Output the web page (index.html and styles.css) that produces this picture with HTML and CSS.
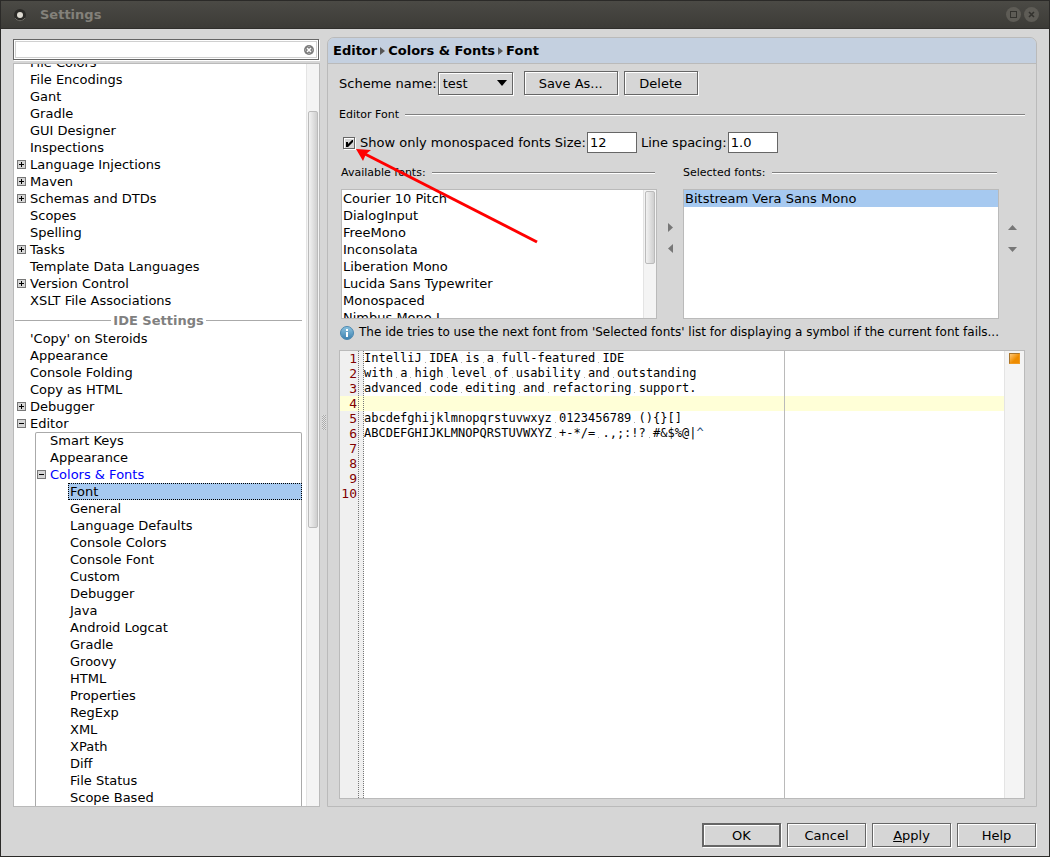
FILE: index.html
```
<!DOCTYPE html>
<html lang="en">
<head>
  <meta charset="UTF-8">
  <title>Settings</title>
  <link rel="stylesheet" href="styles.css">
</head>
<body>
  <header class="titlebar">
    <svg class="app-dot" width="14" height="14" viewBox="0 0 14 14">
      <circle cx="7" cy="7" r="6" fill="#2b2a27"/>
      <path d="M2 10a6 6 0 0 0 10 0" fill="none" stroke="#6b6963"/>
      <circle cx="7" cy="7" r="3" fill="#dfdbd2"/>
    </svg>
    <h1>Settings</h1>
    <div class="window-buttons">
      <button aria-label="Maximize">
        <svg width="15" height="15" viewBox="0 0 15 15"><circle cx="7.5" cy="7.5" r="7.5" fill="#5e5c56"/><rect x="4.5" y="4.5" width="6" height="6" fill="none" stroke="#33322e"/></svg>
      </button>
      <button aria-label="Close">
        <svg width="15" height="15" viewBox="0 0 15 15"><circle cx="7.5" cy="7.5" r="7.5" fill="#5e5c56"/><path d="M5 5l5 5M10 5l-5 5" stroke="#33322e" stroke-width="1.6"/></svg>
      </button>
    </div>
  </header>

  <main>
    <aside class="sidebar">
      <div class="search">
        <input type="text" aria-label="Search settings">
        <button aria-label="Clear">
          <svg width="10" height="10" viewBox="0 0 10 10"><circle cx="5" cy="5" r="5" fill="#7d7d7d"/><path d="M3 3l4 4M7 3l-4 4" stroke="#fff" stroke-width="1.5"/><path d="M5 1v1M5 8v1M1 5h1M8 5h1" stroke="#ccc"/></svg>
        </button>
      </div>
      <nav class="tree">
        <div class="tree-items">
          <ul>
            <li><a href="#">File Colors</a></li>
            <li><a href="#">File Encodings</a></li>
            <li><a href="#">Gant</a></li>
            <li><a href="#">Gradle</a></li>
            <li><a href="#">GUI Designer</a></li>
            <li><a href="#">Inspections</a></li>
            <li><button class="toggle" aria-label="Expand"></button><a href="#">Language Injections</a></li>
            <li><button class="toggle" aria-label="Expand"></button><a href="#">Maven</a></li>
            <li><button class="toggle" aria-label="Expand"></button><a href="#">Schemas and DTDs</a></li>
            <li><a href="#">Scopes</a></li>
            <li><a href="#">Spelling</a></li>
            <li><button class="toggle" aria-label="Expand"></button><a href="#">Tasks</a></li>
            <li><a href="#">Template Data Languages</a></li>
            <li><button class="toggle" aria-label="Expand"></button><a href="#">Version Control</a></li>
            <li><a href="#">XSLT File Associations</a></li>
          </ul>
          <h2>IDE Settings</h2>
          <ul>
            <li><a href="#">'Copy' on Steroids</a></li>
            <li><a href="#">Appearance</a></li>
            <li><a href="#">Console Folding</a></li>
            <li><a href="#">Copy as HTML</a></li>
            <li><button class="toggle" aria-label="Expand"></button><a href="#">Debugger</a></li>
            <li><button class="toggle open" aria-label="Collapse"></button><a href="#">Editor</a></li>
          </ul>
          <ul class="group">
            <li><a href="#">Smart Keys</a></li>
            <li><a href="#">Appearance</a></li>
            <li><button class="toggle open" aria-label="Collapse"></button><a class="active" href="#">Colors &amp; Fonts</a></li>
            <li class="leaf selected"><a href="#">Font</a></li>
            <li class="leaf"><a href="#">General</a></li>
            <li class="leaf"><a href="#">Language Defaults</a></li>
            <li class="leaf"><a href="#">Console Colors</a></li>
            <li class="leaf"><a href="#">Console Font</a></li>
            <li class="leaf"><a href="#">Custom</a></li>
            <li class="leaf"><a href="#">Debugger</a></li>
            <li class="leaf"><a href="#">Java</a></li>
            <li class="leaf"><a href="#">Android Logcat</a></li>
            <li class="leaf"><a href="#">Gradle</a></li>
            <li class="leaf"><a href="#">Groovy</a></li>
            <li class="leaf"><a href="#">HTML</a></li>
            <li class="leaf"><a href="#">Properties</a></li>
            <li class="leaf"><a href="#">RegExp</a></li>
            <li class="leaf"><a href="#">XML</a></li>
            <li class="leaf"><a href="#">XPath</a></li>
            <li class="leaf"><a href="#">Diff</a></li>
            <li class="leaf"><a href="#">File Status</a></li>
            <li class="leaf"><a href="#">Scope Based</a></li>
          </ul>
        </div>
        <div class="scrollbar tree-scroll"><div class="thumb"></div></div>
      </nav>
    </aside>

    <div class="splitter"><span></span></div>

    <section class="panel">
      <div class="breadcrumb">
        <span>Editor</span><i></i><span>Colors &amp; Fonts</span><i></i><span>Font</span>
      </div>

      <div class="content">
        <div class="row scheme">
          <label for="scheme">Scheme name:</label>
          <select id="scheme"><option>test</option></select>
          <button class="btn save">Save As...</button>
          <button class="btn delete">Delete</button>
        </div>

        <h3 class="rule">Editor Font</h3>

        <div class="row font-options">
          <input type="checkbox" id="mono" checked>
          <label for="mono">Show only monospaced fonts</label>
          <label class="field-label" for="size">Size:</label>
          <input type="text" id="size" value="12">
          <label class="field-label" for="spacing">Line spacing:</label>
          <input type="text" id="spacing" value="1.0">
        </div>

        <div class="font-lists">
          <div class="font-column">
            <h3 class="rule">Available fonts:</h3>
            <div class="listbox">
              <ul>
                <li>Courier 10 Pitch</li>
                <li>DialogInput</li>
                <li>FreeMono</li>
                <li>Inconsolata</li>
                <li>Liberation Mono</li>
                <li>Lucida Sans Typewriter</li>
                <li>Monospaced</li>
                <li>Nimbus Mono L</li>
              </ul>
              <div class="scrollbar list-scroll"><div class="thumb"></div></div>
            </div>
          </div>
          <div class="movers">
            <button aria-label="Add"><svg width="5" height="9" viewBox="0 0 5 9"><path d="M0 0l5 4.500L0 9z"/></svg></button>
            <button aria-label="Remove"><svg width="5" height="9" viewBox="0 0 5 9"><path d="M5 0L0 4.500 5 9z"/></svg></button>
          </div>
          <div class="font-column">
            <h3 class="rule">Selected fonts:</h3>
            <div class="listbox">
              <ul>
                <li class="selected">Bitstream Vera Sans Mono</li>
              </ul>
            </div>
          </div>
          <div class="movers">
            <button aria-label="Move up"><svg width="9" height="5" viewBox="0 0 9 5"><path d="M0 5l4.500-5L9 5z"/></svg></button>
            <button aria-label="Move down"><svg width="9" height="5" viewBox="0 0 9 5"><path d="M0 0l4.500 5L9 0z"/></svg></button>
          </div>
        </div>

        <p class="hint">
          <svg width="14" height="14" viewBox="0 0 14 14">
            <defs><linearGradient id="info" x1="0" y1="0" x2="0" y2="1"><stop offset="0" stop-color="#8ec4e0"/><stop offset="1" stop-color="#3a7fae"/></linearGradient></defs>
            <circle cx="7" cy="7" r="6.500" fill="url(#info)" stroke="#4c88b0"/>
            <path d="M6 3h2v2H6zM6 6h2v5H6z" fill="#fff"/>
          </svg>
          <span>The ide tries to use the next font from 'Selected fonts' list for displaying a symbol if the current font fails...</span>
        </p>

        <div class="editor">
          <div class="code">
            <div class="line"><b>1</b><code>IntelliJ IDEA is a full-featured IDE</code></div>
            <div class="line"><b>2</b><code>with a high level of usability and outstanding</code></div>
            <div class="line"><b>3</b><code>advanced code editing and refactoring support.</code></div>
            <div class="line current"><b>4</b><code></code></div>
            <div class="line"><b>5</b><code>abcdefghijklmnopqrstuvwxyz 0123456789 (){}[]</code></div>
            <div class="line"><b>6</b><code>ABCDEFGHIJKLMNOPQRSTUVWXYZ +-*/= .,;:!? #&amp;$%@|<span class="caret-char">^</span></code></div>
            <div class="line"><b>7</b><code></code></div>
            <div class="line"><b>8</b><code></code></div>
            <div class="line"><b>9</b><code></code></div>
            <div class="line"><b>10</b><code></code></div>
            <div class="fold-guide"></div>
            <div class="margin-guide"></div>
          </div>
          <div class="stripe"><span></span></div>
        </div>

        <svg class="pointer" width="184" height="96" viewBox="0 0 184 96">
          <path d="M9 5L181 93" stroke="#f00" stroke-width="3"/>
          <path d="M0 0L15 1 10 5 7 12z" fill="#f00"/>
        </svg>
      </div>
    </section>
  </main>

  <footer>
    <button class="btn primary">OK</button>
    <button class="btn">Cancel</button>
    <button class="btn"><u>A</u>pply</button>
    <button class="btn">Help</button>
  </footer>

  <script>
    // show whitespace dots in the preview
    document.querySelectorAll(".line code").forEach(code => {
      code.childNodes.forEach(node => {
        if (node.nodeType !== Node.TEXT_NODE) return;
        const parts = node.textContent.split(" ");
        const out = document.createDocumentFragment();
        parts.forEach((part, i) => {
          if (i > 0) {
            const ws = document.createElement("span");
            ws.className = "ws";
            ws.textContent = " ";
            out.append(ws);
          }
          out.append(part);
        });
        node.replaceWith(out);
      });
    });
  </script>
</body>
</html>
```
FILE: styles.css
```
* {
  box-sizing: border-box;
}

body {
  margin: 0;
  height: 100vh;
  display: flex;
  flex-direction: column;
  overflow: hidden;
  background: #d6d6d6;
  border: 1px solid #2b2a28;
  font-family: "DejaVu Sans", sans-serif;
  font-size: 13px;
  line-height: 17px;
  color: #000;
}

button, input, select {
  font-family: inherit;
  font-size: inherit;
  color: inherit;
  border-radius: 0;
}

h1, h2, h3, p, ul {
  margin: 0;
  padding: 0;
  font-size: inherit;
}

ul {
  list-style: none;
}

a {
  color: inherit;
  text-decoration: none;
}

svg {
  flex: none;
}

/* title bar */
.titlebar {
  flex: none;
  display: flex;
  align-items: center;
  height: 28px;
  padding: 0 10px 0 12px;
  background: linear-gradient(#4b4a45, #3c3b37);
  border-bottom: 1px solid #2f2e2b;
}

.titlebar h1 {
  flex: 1;
  margin-left: 13px;
  color: #83817a;
}

.window-buttons {
  display: flex;
  gap: 3px;
}

.window-buttons button,
.search button,
.movers button {
  display: flex;
  padding: 0;
  border: 0;
  background: none;
}

main {
  flex: 1;
  min-height: 0;
  display: flex;
  padding: 8px 12px 0;
}

/* sidebar */
.sidebar {
  flex: none;
  width: 307px;
  display: flex;
  flex-direction: column;
  padding-top: 2px;
}

.search {
  display: flex;
  align-items: center;
  height: 21px;
  margin: 0 1px 3px 0;
  padding: 1px 4px 1px 1px;
  background: #fff;
  border: 1px solid #666;
  box-shadow: inset 0 0 0 1px #fff, inset 0 0 0 2px #d0d0d0, 1px 1px 0 #fff;
}

.search input {
  flex: 1;
  min-width: 0;
  height: 16px;
  padding: 0 4px;
  border: 0;
  background: none;
  outline: none;
}

.tree {
  flex: 1;
  min-height: 0;
  display: flex;
  overflow: hidden;
  background: #fff;
  border: 1px solid #bababa;
}

.tree-items {
  flex: 1;
  margin-top: -10px;
  padding-right: 4px;
}

.tree li {
  display: flex;
  align-items: center;
  height: 17px;
  padding-left: 16px;
  white-space: nowrap;
}

.toggle {
  width: 9px;
  height: 9px;
  margin: 0 4px 0 -13px;
  padding: 0;
  border: 1px solid #777;
  background:
    linear-gradient(#000, #000) center / 5px 1px no-repeat,
    linear-gradient(#000, #000) center / 1px 5px no-repeat,
    #d6d6d6;
}

.toggle.open {
  background: linear-gradient(#000, #000) center / 5px 1px no-repeat, #d6d6d6;
}

.tree h2 {
  display: flex;
  align-items: center;
  gap: 2px;
  height: 21px;
  padding: 2px 0 0 1px;
  color: #808080;
}

.tree h2::before,
.tree h2::after {
  content: "";
  flex: 1;
  height: 1px;
  background: #aaa;
}

.tree .group {
  margin-left: 21px;
  padding-bottom: 17px;
  box-shadow: inset 0 0 0 1px #aaa;
  border-radius: 2px 2px 0 0;
}

.group li {
  padding-left: 15px;
}

.group .leaf {
  margin-left: 33px;
  padding-left: 2px;
}

.group .selected {
  padding-left: 1px;
  background: #a6c9f0;
  border: 1px dotted #000;
}

.active {
  color: #00f;
}

.scrollbar {
  flex: none;
  width: 13px;
  padding: 1px;
  background: #f4f4f4;
  border-left: 1px solid #e4e4e4;
}

.thumb {
  border: 1px solid #bbb;
  border-radius: 2px;
  background: linear-gradient(to right, #f2f2f2, #cfcfcf);
}

.tree-scroll {
  padding-top: 47px;
}

.tree-scroll .thumb {
  height: 417px;
}

.splitter {
  flex: none;
  width: 7px;
  display: flex;
  align-items: center;
  justify-content: center;
}

.splitter span {
  width: 4px;
  height: 15px;
  background: repeating-conic-gradient(#aaa 0 25%, #e4e4e4 0 50%) 0 0 / 2px 2px;
}

/* settings panel */
.panel {
  flex: 1;
  min-width: 0;
  display: flex;
  flex-direction: column;
  border: 1px solid #bababa;
  border-radius: 7px 7px 0 0;
}

.breadcrumb {
  flex: none;
  display: flex;
  align-items: center;
  height: 26px;
  padding-left: 5px;
  background: #c4d0e0;
  border-bottom: 1px solid #bababa;
  border-radius: 6px 6px 0 0;
  font-weight: bold;
}

.breadcrumb i {
  margin: 0 3px;
  border: 4px solid transparent;
  border-left: 5px solid #555;
  border-right: 0;
}

.content {
  position: relative;
  flex: 1;
  min-height: 0;
  display: flex;
  flex-direction: column;
  padding: 7px 11px;
}

.row {
  flex: none;
  display: flex;
  align-items: center;
}

.btn {
  width: 79px;
  height: 24px;
  padding: 0;
  background: #d6d6d6;
  border: 1px solid #666;
  box-shadow: inset 1px 1px 0 #fff, 1px 1px 0 #fff;
}

.scheme {
  height: 24px;
}

.scheme select {
  width: 75px;
  height: 23px;
  margin: 0 11px 0 1px;
  padding: 0 4px;
  appearance: none;
  border: 1px solid #666;
  box-shadow: inset 1px 1px 0 #fff, 1px 1px 0 #fff;
  background: #d6d6d6 url("data:image/svg+xml,%3Csvg xmlns='http://www.w3.org/2000/svg' width='10' height='6'%3E%3Cpath d='M0 0h10L5 6z'/%3E%3C/svg%3E") right 5px center no-repeat;
}

.btn.save {
  width: 94px;
  margin-right: 6px;
}

.btn.delete {
  width: 74px;
}

.rule {
  flex: none;
  display: flex;
  align-items: center;
  gap: 6px;
  font-size: 11px;
  font-weight: normal;
}

.rule::after {
  content: "";
  flex: 1;
  height: 2px;
  background: linear-gradient(#808080 50%, #fff 50%);
}

.content > .rule {
  margin-top: 11px;
}

.font-options {
  margin-top: 9px;
  padding-left: 4px;
}

.font-options input[type="checkbox"] {
  width: 12px;
  height: 12px;
  margin: 0 5px 0 0;
  appearance: none;
  border: 1px solid #666;
  box-shadow: inset 1px 1px 0 #fff, 1px 1px 0 #fff;
}

.font-options input[type="checkbox"]:checked {
  background: url("data:image/svg+xml,%3Csvg xmlns='http://www.w3.org/2000/svg' width='10' height='10'%3E%3Cpath d='M2 4h2v2l4-4h1v2L4 9H2z'/%3E%3C/svg%3E") no-repeat;
}

.font-options input[type="text"] {
  width: 50px;
  height: 21px;
  margin-left: 1px;
  padding: 0 2px;
  border: 1px solid #666;
  background: #fff;
}

.field-label {
  margin-left: 4px;
}

.font-lists {
  flex: none;
  display: flex;
  margin-top: 11px;
  padding-left: 2px;
}

.font-column {
  flex: 1;
  min-width: 0;
}

.font-column .rule {
  margin-right: 2px;
}

.listbox {
  display: flex;
  height: 130px;
  margin-top: 8px;
  overflow: hidden;
  background: #fff;
  border: 1px solid #bababa;
}

.listbox ul {
  flex: 1;
}

.listbox li {
  padding-left: 1px;
}

.listbox .selected {
  background: #a6c9f0;
}

.list-scroll .thumb {
  height: 73px;
}

.movers {
  flex: none;
  width: 26px;
  display: flex;
  flex-direction: column;
  align-items: center;
  gap: 12px;
  padding-top: 59px;
}

.movers svg {
  fill: #777;
}

.movers:last-child {
  gap: 17px;
  padding-top: 61px;
}

.hint {
  flex: none;
  display: flex;
  align-items: center;
  gap: 5px;
  margin: 5px 0 9px 1px;
  font-size: 12px;
  white-space: nowrap;
}

/* preview editor */
.editor {
  flex: 1;
  min-height: 0;
  display: flex;
  border: 1px solid #bababa;
}

.code {
  position: relative;
  flex: 1;
  background: linear-gradient(to right, #f0f0f0 24px, #fff 24px);
  font-family: "DejaVu Sans Mono", monospace;
  font-size: 12px;
}

.line {
  display: flex;
  height: 15px;
  line-height: 15px;
}

.line.current {
  background: #ffffd7;
}

.line b {
  width: 17px;
  margin-right: 7px;
  text-align: right;
  font-size: 13px;
  font-weight: normal;
  color: #800000;
}

.line code {
  font-family: inherit;
  white-space: pre;
}

.caret-char {
  color: #1a4a7a;
}

.ws {
  background: linear-gradient(#aaa, #aaa) 3px 11px / 1px 1px no-repeat;
}

/* dotted lines on both sides of the folding area */
.fold-guide {
  position: absolute;
  top: 0;
  bottom: 0;
  left: 18px;
  width: 6px;
  background:
    repeating-linear-gradient(#777 0 1px, transparent 1px 2px) left / 1px 100% no-repeat,
    repeating-linear-gradient(#777 0 1px, transparent 1px 2px) right / 1px 100% no-repeat;
}

.margin-guide {
  position: absolute;
  top: 0;
  bottom: 0;
  left: 444px;
  border-left: 1px solid #bababa;
}

.stripe {
  flex: none;
  width: 20px;
  padding: 2px 4px;
  background: #f4f4f4;
  border-left: 1px solid #e4e4e4;
}

.stripe span {
  display: block;
  width: 11px;
  height: 11px;
  border: 1px solid #a8742c;
  border-right-color: #f09a20;
  border-bottom-color: #f09a20;
  background: linear-gradient(135deg, #ffc878, #ee8c00 60%);
}

/* red arrow over the form */
.pointer {
  position: absolute;
  left: 28px;
  top: 85px;
  fill: none;
  pointer-events: none;
}

footer {
  flex: none;
  display: flex;
  justify-content: flex-end;
  gap: 6px;
  padding: 16px 13px 9px;
}

.btn.primary {
  border-width: 2px;
}
```
